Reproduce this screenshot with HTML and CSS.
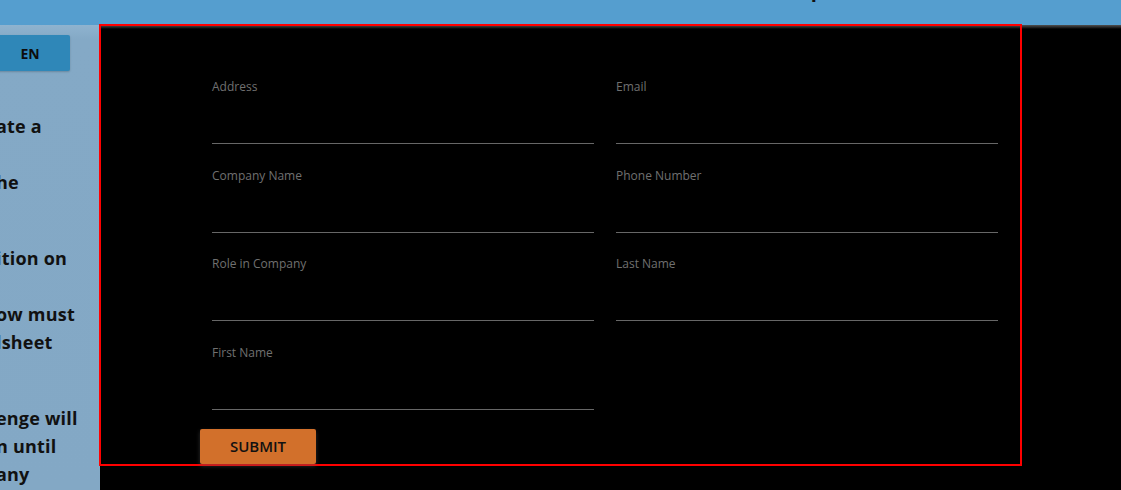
FILE: index.html
```html
<!DOCTYPE html>
<html lang="en">
<head>
<meta charset="utf-8">
<title>Company Form</title>
<link rel="stylesheet" href="styles.css">
</head>
<body>
<header class="topbar">
  <span class="title">Setup</span>
</header>
<div class="main">
  <aside class="sidebar">
    <button class="lang" type="button">EN</button>
    <div class="intro">
      <div class="para">
        <div class="line">ate a</div>
        <div class="line">&nbsp;</div>
        <div class="line">he</div>
        <div class="line">&nbsp;</div>
      </div>
      <div class="para">
        <div class="line">ition on</div>
        <div class="line">&nbsp;</div>
        <div class="line">ow must</div>
        <div class="line">lsheet</div>
        <div class="line">&nbsp;</div>
      </div>
      <div class="para">
        <div class="line">enge will</div>
        <div class="line">n until</div>
        <div class="line">any</div>
      </div>
    </div>
  </aside>
  <section class="panel">
    <form class="form">
      <div class="fields">
        <label class="field"><span class="label">Address</span><input class="input" type="text"></label>
        <label class="field"><span class="label">Email</span><input class="input" type="text"></label>
        <label class="field"><span class="label">Company Name</span><input class="input" type="text"></label>
        <label class="field"><span class="label">Phone Number</span><input class="input" type="text"></label>
        <label class="field"><span class="label">Role in Company</span><input class="input" type="text"></label>
        <label class="field"><span class="label">Last Name</span><input class="input" type="text"></label>
        <label class="field"><span class="label">First Name</span><input class="input" type="text"></label>
      </div>
      <button class="submit" type="button">SUBMIT</button>
    </form>
  </section>
</div>
</body>
</html>
```

FILE: styles.css
```css
* { box-sizing: border-box; }
html, body {
  margin: 0;
  padding: 0;
  height: 100%;
  overflow: hidden;
  background: #000;
  font-family: "Open Sans", "Liberation Sans", sans-serif;
}

.topbar {
  height: 25px;
  background: #559ecf;
  display: flex;
  align-items: flex-start;
  overflow: hidden;
  position: relative;
  z-index: 1;
}
.title {
  margin-top: -22px;
  margin-left: 766px;
  font-size: 20px;
  line-height: 24px;
  font-weight: 700;
  color: #111;
}

.main {
  display: flex;
  height: 465px;
  background: linear-gradient(#505050 0, #2a2a2a 2px, #000 4px);
}

.sidebar {
  width: 100px;
  flex: none;
  background: linear-gradient(#8fb3cf 0, #84a9c6 14px, #83a8c5 100%);
  overflow: hidden;
  padding-top: 10px;
}
.lang {
  display: block;
  width: 80px;
  height: 36px;
  margin: 0 0 0 -10px;
  padding: 0 10px 0 0;
  border: none;
  border-radius: 0 2px 2px 0;
  background: #2f87b8;
  box-shadow: 0 1px 2px rgba(0,0,0,0.2);
  color: #0d0d0d;
  font-family: inherit;
  font-size: 14px;
  font-weight: 700;
  text-align: center;
  text-indent: 10px;
}
.intro {
  margin-top: 41px;
  margin-left: -4px;
  color: #111;
  font-size: 18px;
  font-weight: 700;
  letter-spacing: 0.2px;
  line-height: 28px;
  white-space: nowrap;
}
.para + .para { margin-top: 20px; }

.panel {
  width: 923px;
  height: 442px;
  margin: -1px 0 0 -1px;
  border: 2px solid #ff0000;
  position: relative;
  z-index: 2;
  padding: 53px 22px 0 111px;
}

.fields {
  display: grid;
  grid-template-columns: 382px 382px;
  column-gap: 22px;
  row-gap: 23.5px;
}
.field {
  display: flex;
  flex-direction: column;
}
.label {
  font-size: 12px;
  line-height: 16px;
  color: #707070;
}
.input {
  height: 49px;
  border: none;
  border-bottom: 1px solid #676767;
  background: transparent;
  outline: none;
  color: #ccc;
  font-family: inherit;
  padding: 0;
}

.submit {
  display: block;
  margin: 19px 0 0 -12px;
  width: 116px;
  height: 35px;
  border: none;
  border-radius: 2px;
  background: #d2702b;
  box-shadow: 0 2px 4px rgba(90,90,90,0.5);
  color: #111;
  font-family: inherit;
  font-size: 15px;
  font-weight: 600;
  padding: 0;
}
```
